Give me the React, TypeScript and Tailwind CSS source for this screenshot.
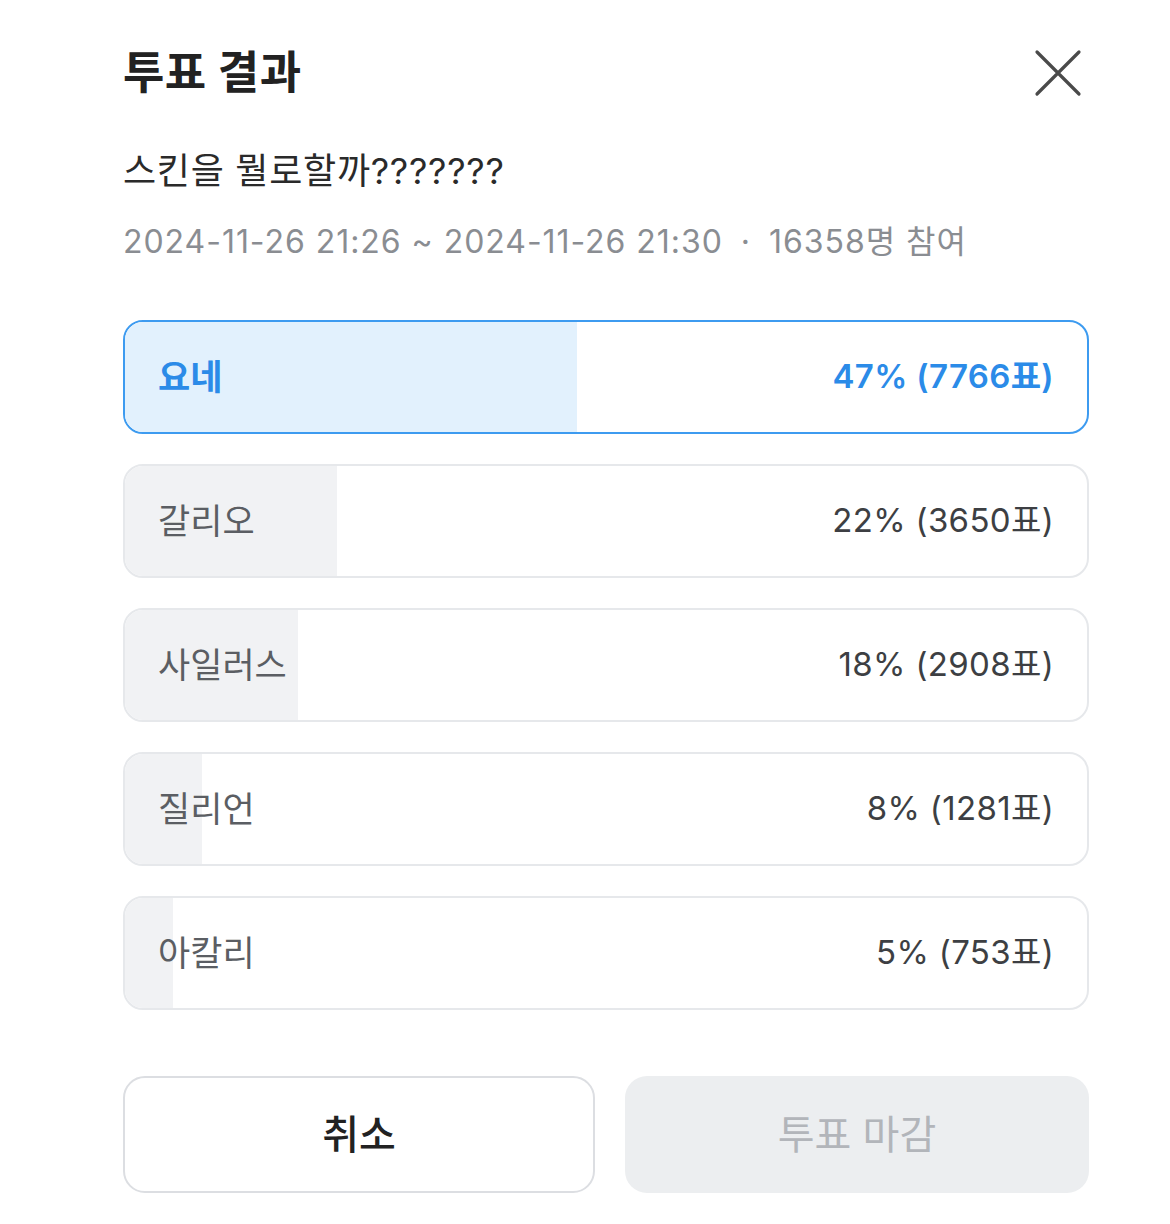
interface PollOption {
    label: string;
    percent: number;
    votes: number;
}

const options: PollOption[] = [
    { label: "요네", percent: 47, votes: 7766 },
    { label: "갈리오", percent: 22, votes: 3650 },
    { label: "사일러스", percent: 18, votes: 2908 },
    { label: "질리언", percent: 8, votes: 1281 },
    { label: "아칼리", percent: 5, votes: 753 },
];

const font = { fontFamily: 'Inter, "Noto Sans CJK KR", "Noto Sans", sans-serif' };

export default function App() {
    const top = Math.max(...options.map((o) => o.votes));

    return (
        <div className="w-[1170px] h-[1224px] bg-white pl-[123px] pr-[81px] pt-[42px]" style={font}>
            {/* Header */}
            <div className="flex items-center justify-between h-[62px]">
                <h1 className="text-[45px] font-bold text-[#222] tracking-[0.01em]">투표 결과</h1>
                <button className="w-[48px] h-[48px] flex items-center justify-center mr-[7px]" aria-label="닫기">
                    <svg viewBox="0 0 48 48" className="w-[48px] h-[48px]" fill="none" stroke="#4a4a4a" strokeWidth={3.2} strokeLinecap="round">
                        <path d="M3 3 L45 45 M45 3 L3 45" />
                    </svg>
                </button>
            </div>

            <p className="mt-[45px] text-[36px] text-[#2a2a2a] leading-[44px] tracking-[0.02em]">스킨을 뭘로할까???????</p>
            <p className="mt-[29px] text-[32px] text-[#8a8d92] leading-[40px] tracking-[0.03em]">
                2024-11-26 21:26 ~ 2024-11-26 21:30 <span className="mx-[8px]">·</span> 16358명 참여
            </p>

            {/* Options */}
            <div className="mt-[58px] flex flex-col gap-[30px]">
                {options.map((o) => {
                    const win = o.votes === top;
                    return (
                        <div
                            key={o.label}
                            className={
                                win
                                    ? "relative h-[114px] rounded-[20px] border-[2.5px] border-[#3d9bf0] overflow-hidden bg-white"
                                    : "relative h-[114px] rounded-[20px] border-2 border-[#e6e8eb] overflow-hidden bg-white"
                            }
                        >
                            <div
                                className={win ? "absolute inset-y-0 left-0 bg-[#e2f1fd]" : "absolute inset-y-0 left-0 bg-[#f1f2f4]"}
                                style={{ width: `${o.percent}%` }}
                            />
                            <div className="relative h-full flex items-center justify-between pl-[33px] pr-[33px]">
                                <span className={win ? "text-[35px] font-bold text-[#2b8be8]" : "text-[35px] text-[#5b5e63]"}>
                                    {o.label}
                                </span>
                                <span
                                    className={
                                        win
                                            ? "text-[33px] font-semibold text-[#2b8be8] tracking-[0.01em]"
                                            : "text-[33px] text-[#3d3f43] tracking-[0.01em]"
                                    }
                                >
                                    {o.percent}% ({o.votes}표)
                                </span>
                            </div>
                        </div>
                    );
                })}
            </div>

            {/* Actions */}
            <div className="mt-[66px] flex gap-[30px]">
                <button className="w-[472px] h-[117px] rounded-[22px] border-2 border-[#dcdee2] bg-white text-[40px] font-medium text-[#222]">
                    취소
                </button>
                <button className="flex-1 h-[117px] rounded-[22px] bg-[#eceef0] text-[40px] text-[#b2b5ba]" disabled>
                    투표 마감
                </button>
            </div>
        </div>
    );
}
